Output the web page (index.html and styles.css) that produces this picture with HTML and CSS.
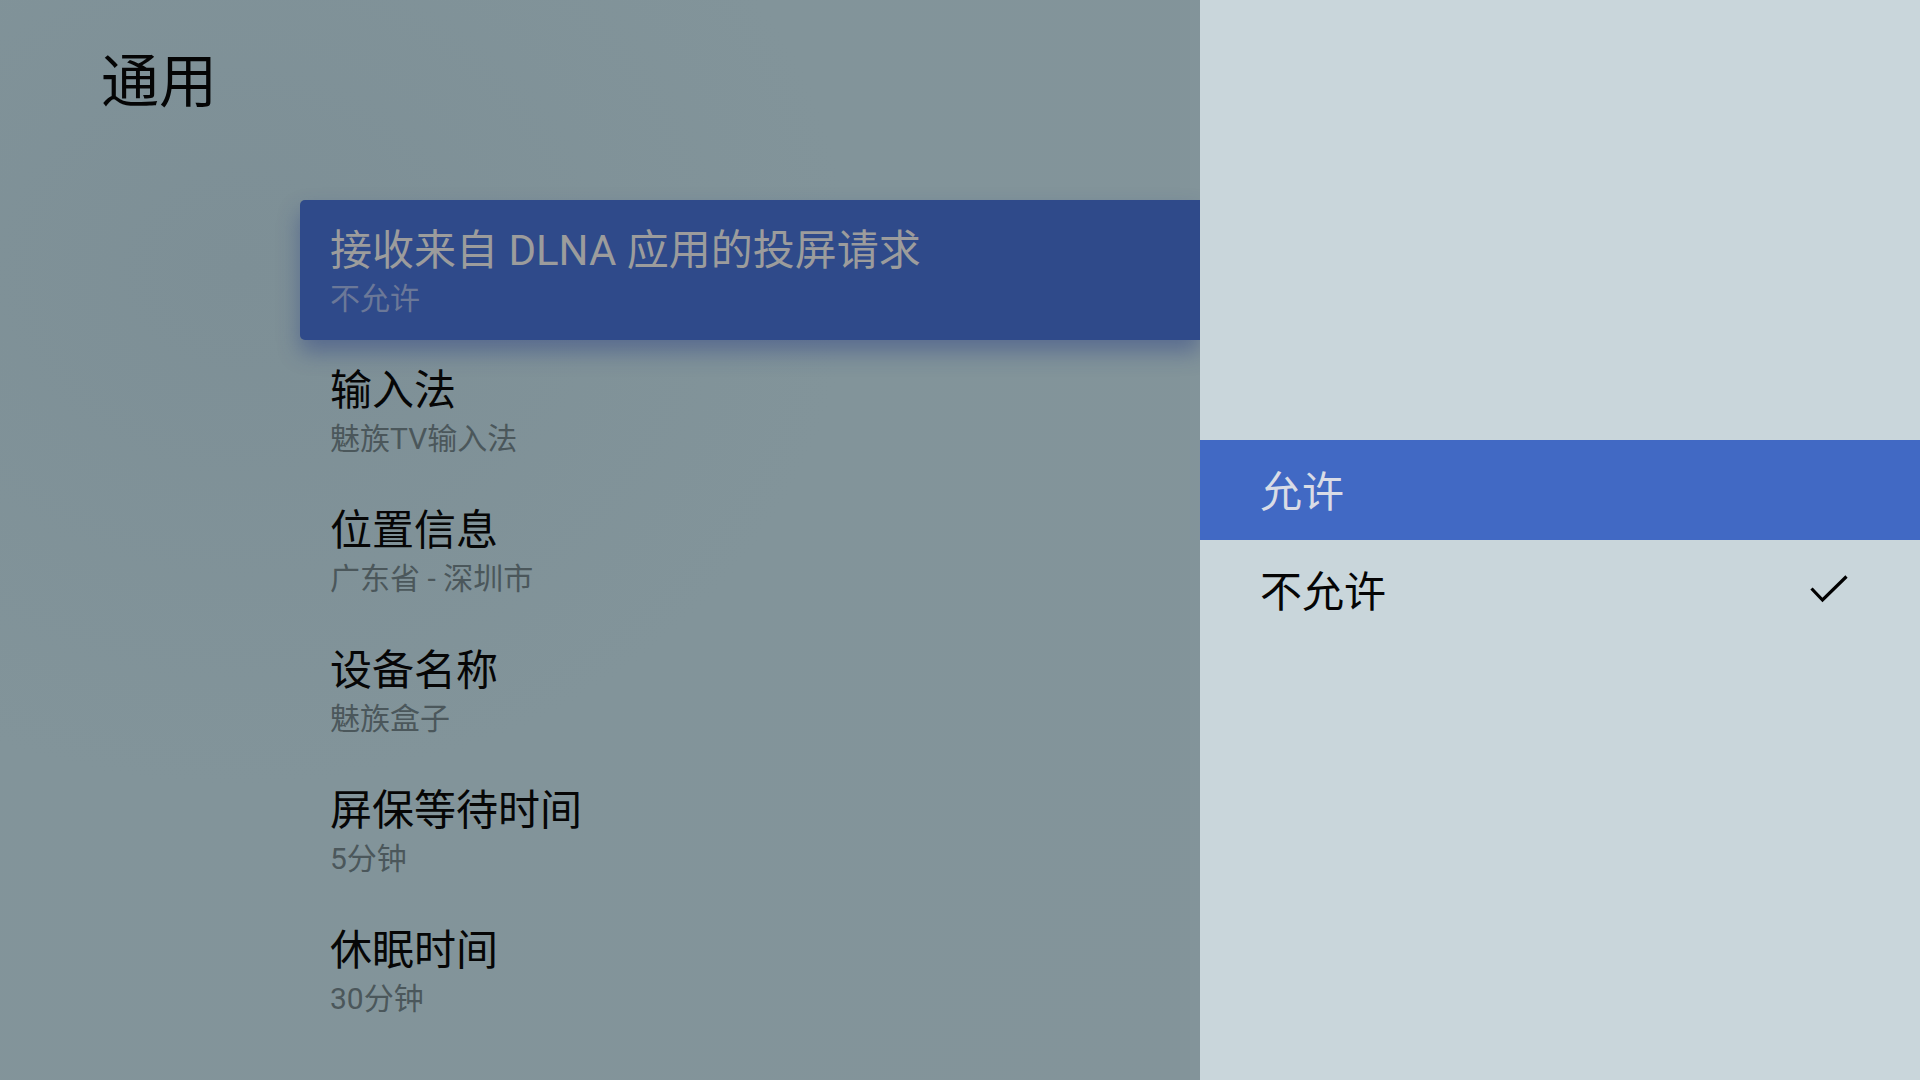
FILE: index.html
```html
<!DOCTYPE html>
<html lang="zh-CN">
<head>
    <meta charset="UTF-8">
    <meta name="viewport" content="width=device-width, initial-scale=1.0">
    <title>通用</title>
    <link rel="stylesheet" href="styles.css">
</head>
<body>
    <div class="settings">
        <div class="settings-main">
            <h1 class="page-title">通用</h1>
            <ul class="pref-list">
                <li class="pref-item focused">
                    <div class="pref-title">接收来自 DLNA 应用的投屏请求</div>
                    <div class="pref-summary">不允许</div>
                </li>
                <li class="pref-item">
                    <div class="pref-title">输入法</div>
                    <div class="pref-summary">魅族TV输入法</div>
                </li>
                <li class="pref-item">
                    <div class="pref-title">位置信息</div>
                    <div class="pref-summary">广东省 - 深圳市</div>
                </li>
                <li class="pref-item">
                    <div class="pref-title">设备名称</div>
                    <div class="pref-summary">魅族盒子</div>
                </li>
                <li class="pref-item">
                    <div class="pref-title">屏保等待时间</div>
                    <div class="pref-summary">5分钟</div>
                </li>
                <li class="pref-item">
                    <div class="pref-title">休眠时间</div>
                    <div class="pref-summary">30分钟</div>
                </li>
            </ul>
        </div>

        <div class="settings-side">
            <ul class="choice-list">
                <li class="choice active">
                    <span>允许</span>
                </li>
                <li class="choice">
                    <span>不允许</span>
                    <svg class="check" width="38" height="28" viewBox="0 0 38 28">
                        <path d="M1.5 13.5 L12.5 25 L36.5 1.5" fill="none" stroke="#000" stroke-width="3.2"/>
                    </svg>
                </li>
            </ul>
        </div>
    </div>
</body>
</html>
```

FILE: styles.css
```css
* {
    margin: 0;
    padding: 0;
    box-sizing: border-box;
}

body {
    font-family: Roboto, "Noto Sans CJK SC", sans-serif;
    width: 1920px;
    height: 1080px;
    overflow: hidden;
}

.settings {
    display: flex;
    height: 100%;
}

/* left column */
.settings-main {
    width: 1200px;
    padding-top: 47px;
    background: radial-gradient(ellipse at 20% 25%, #7d8f96 0%, #82949a 45%, #83949a 100%);
}

.page-title {
    font-size: 58px;
    font-weight: normal;
    line-height: 70px;
    color: #050505;
    padding-left: 101px;
}

.pref-list {
    list-style: none;
    margin-top: 83px;
    margin-left: 300px;
}

.pref-item {
    height: 140px;
    padding: 27px 30px 0;
}

.pref-title {
    font-size: 42px;
    line-height: 48px;
    color: #060606;
}

.pref-summary {
    font-size: 30px;
    line-height: 36px;
    margin-top: 6px;
    color: #4b575b;
}

.pref-item.focused {
    background: #2f4a8a;
    border-radius: 5px 0 0 5px;
    box-shadow: 0 12px 22px rgba(40, 60, 130, 0.45);
}

.pref-item.focused .pref-title {
    color: #9c9c9c;
}

.pref-item.focused .pref-summary {
    color: #6b7898;
}

/* right column */
.settings-side {
    flex: 1;
    background: #c9d6db;
    padding-top: 440px;
}

.choice-list {
    list-style: none;
}

.choice {
    height: 100px;
    padding: 0 72px 4px 60px;
    display: flex;
    align-items: center;
    justify-content: space-between;
    font-size: 42px;
    color: #050505;
}

.choice .check {
    margin-top: 2px;
}

.choice.active {
    background: #4169c4;
    color: #d9dce6;
}

.check {
    display: block;
}
```
